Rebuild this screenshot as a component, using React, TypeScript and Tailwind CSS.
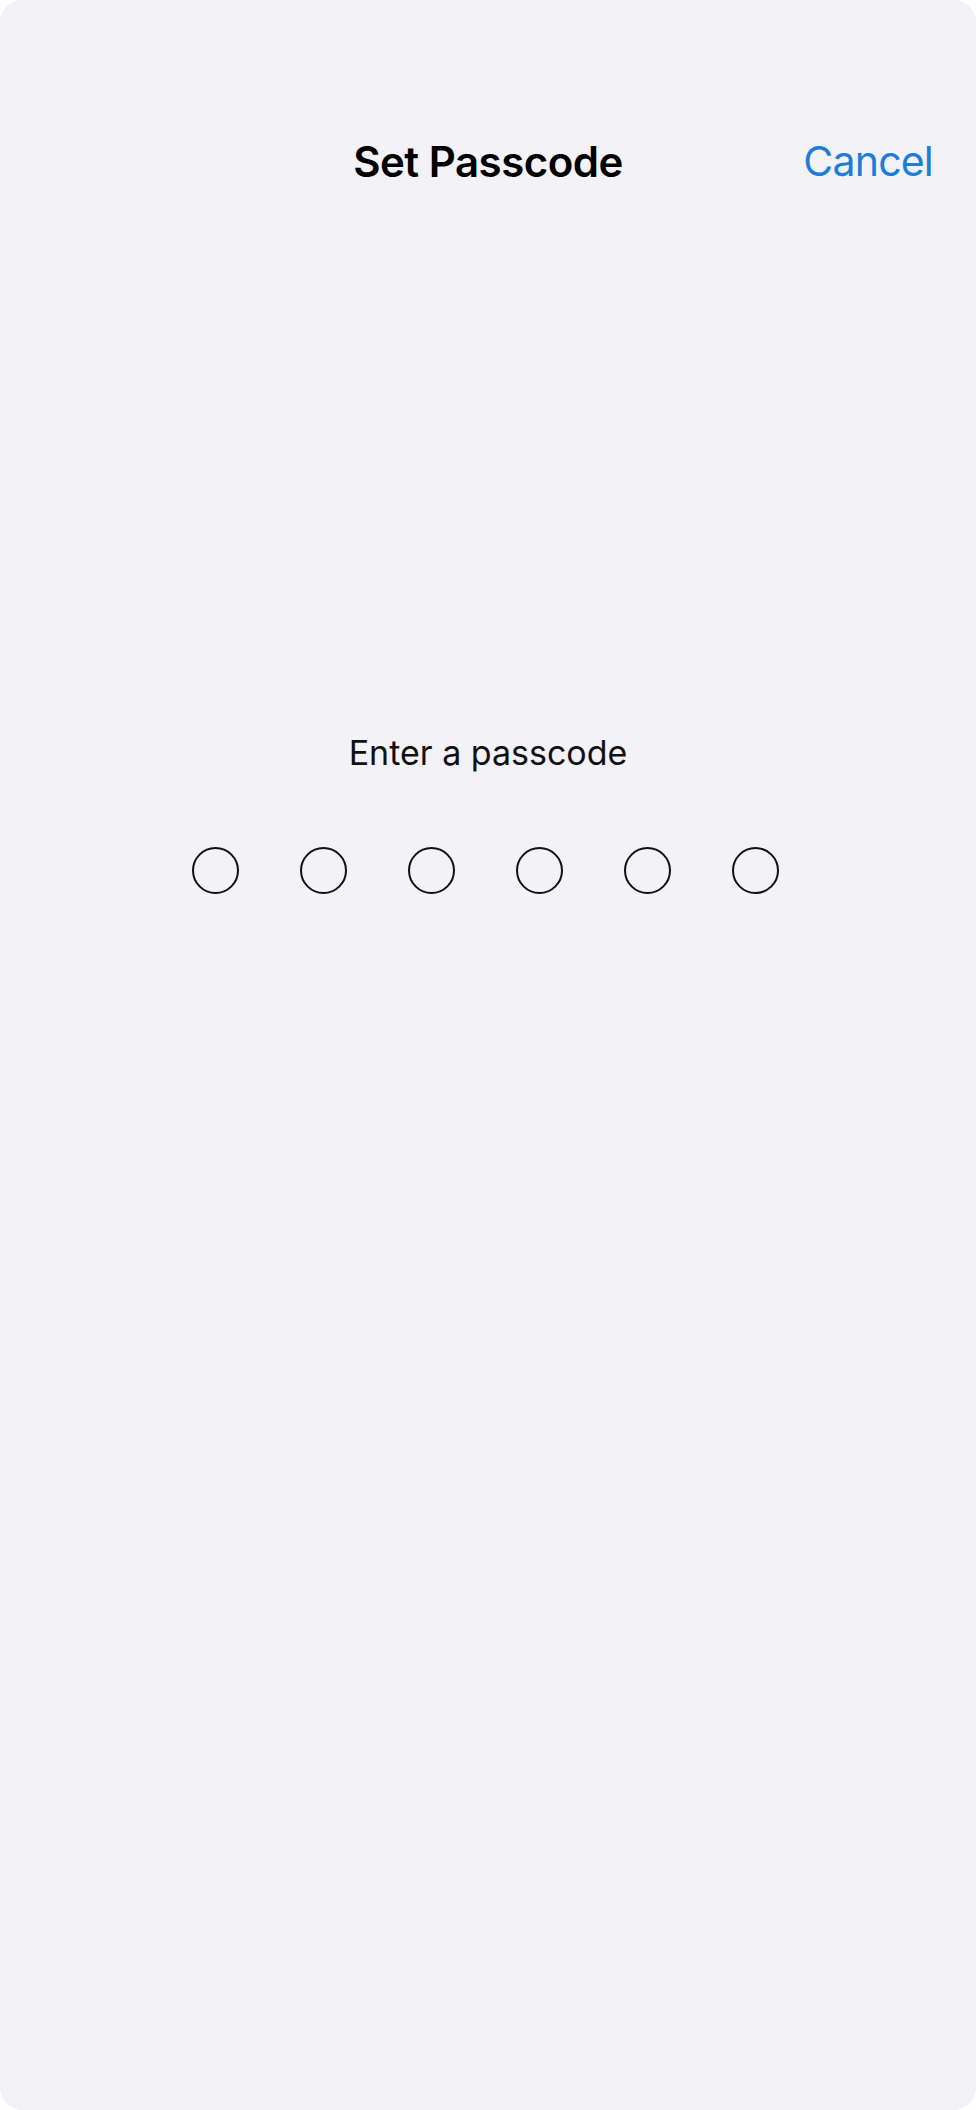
import React from "react";

export default function App() {
  const dots = [0, 1, 2, 3, 4, 5];
  return (
    <div className="w-[976px] h-[2110px] bg-white" style={{ fontFamily: "Inter, 'Noto Sans', sans-serif" }}>
      <div className="h-full rounded-[22px] bg-[#f2f2f7] flex flex-col">
        <div className="relative mt-[141px] flex justify-center">
          <h1 className="text-[42px] leading-none font-semibold text-black tracking-[-0.5px]">Set Passcode</h1>
          <button className="absolute right-[43px] top-0 text-[41px] leading-none text-[#1c7ed6] tracking-[-0.8px]">
            Cancel
          </button>
        </div>

        <div className="mt-[553px] flex flex-col items-center">
          <p className="text-[34px] leading-none text-[#111]">Enter a passcode</p>
          <div className="mt-[77px] mr-[6px] flex gap-[61px]">
            {dots.map((d) => (
              <span key={d} className="w-[47px] h-[47px] rounded-full border-[2.5px] border-[#111]" />
            ))}
          </div>
        </div>
      </div>
    </div>
  );
}
